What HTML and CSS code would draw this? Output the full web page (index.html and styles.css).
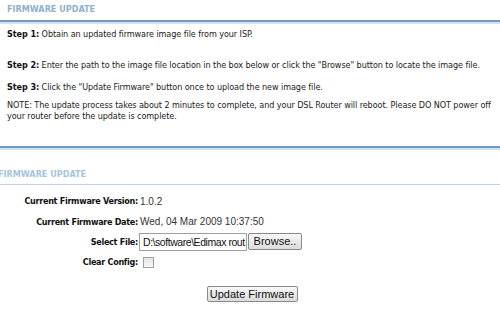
FILE: index.html
```html
<!DOCTYPE html>
<html>
<head>
<meta charset="utf-8">
<link rel="stylesheet" href="styles.css">
</head>
<body>
<div class="page">
  <div class="sec-head">FIRMWARE UPDATE</div>
  <div class="sec-line"></div>
  <div class="steps">
    <p class="p1"><b>Step 1:</b> Obtain an updated firmware image file from your ISP.</p>
    <p class="p2"><b>Step 2:</b> Enter the path to the image file location in the box below or click the "Browse" button to locate the image file.</p>
    <p class="p3"><b>Step 3:</b> Click the "Update Firmware" button once to upload the new image file.</p>
    <p class="p4">NOTE: The update process takes about 2 minutes to complete, and your DSL Router will reboot. Please DO NOT power off your router before the update is complete.</p>
  </div>
  <div class="sec-line"></div>
  <div class="sub-head">FIRMWARE UPDATE</div>
  <div class="form">
    <div class="row"><span class="lbl">Current Firmware Version:</span><span class="val">1.0.2</span></div>
    <div class="row"><span class="lbl">Current Firmware Date:</span><span class="val">Wed, 04 Mar 2009 10:37:50</span></div>
    <div class="row"><span class="lbl">Select File:</span><span class="val"><span class="file">D:\software\Edimax rout</span><span class="btn browse">Browse..</span></span></div>
    <div class="row"><span class="lbl">Clear Config:</span><span class="val"><span class="chk"></span></span></div>
  </div>
  <div class="submit"><span class="btn upd">Update Firmware</span></div>
</div>
</body>
</html>
```
FILE: styles.css
```css
html, body { margin: 0; padding: 0; background: #fff; }
body { width: 500px; height: 309px; overflow: hidden; font-family: "DejaVu Sans Condensed", "Liberation Sans", sans-serif; font-size: 9px; color: #222; }
.sec-head { height: 20px; padding: 3px 0 0 7px; box-sizing: border-box; font-weight: bold; color: #8fb0d0; line-height: 12px; }
.sec-line { height: 2px; background: #7098c0; border-bottom: 2px solid #cfe2f3; }
.steps { padding: 5px 6px 0 7px; letter-spacing: -0.08px; }
.steps p { margin: 0; line-height: 11px; }
.steps p.p1 { margin-bottom: 20px; }
.steps p.p2 { margin-bottom: 11px; }
.steps p.p3 { margin-bottom: 7px; }
.steps p.p4 { margin-bottom: 24px; }
.steps b { color: #111; }
.sub-head { font-weight: bold; color: #a8c4dc; margin-left: -2px; line-height: 12px; margin-top: 18px; padding-bottom: 4px; border-bottom: 1px solid #b8d0e8; }
.form { padding-top: 6px; }
.row { display: flex; align-items: center; height: 20.4px; }
.lbl { width: 138px; text-align: right; font-weight: bold; color: #111; letter-spacing: -0.3px; white-space: nowrap; }
.val { padding-left: 2px; display: flex; align-items: center; font-family: "Liberation Sans", sans-serif; font-size: 10px; color: #333; }
.file { width: 108px; height: 18px; box-sizing: border-box; border: 1px solid #a0a0a0; line-height: 16px; padding-left: 3px; overflow: hidden; white-space: pre; font-family: "Liberation Sans", sans-serif; font-size: 10.5px; letter-spacing: -0.45px; color: #111; margin-left: -1px; }
.btn { display: inline-block; border: 1px solid #8a8a8a; border-radius: 2px; background: linear-gradient(#f8f8f8, #dcdcdc); font-family: "Liberation Sans", sans-serif; font-size: 11px; color: #111; text-align: center; box-sizing: border-box; }
.browse { width: 54px; height: 17px; line-height: 15px; margin-left: 1px; }
.chk { width: 9px; height: 9px; border: 1px solid #a0a0a0; background: linear-gradient(#e4e4e4, #fafafa); margin-left: 3px; }
.submit { display: flex; justify-content: center; padding-top: 13px; padding-left: 4px; }
.upd { width: 91px; height: 16px; line-height: 14px; }
```
